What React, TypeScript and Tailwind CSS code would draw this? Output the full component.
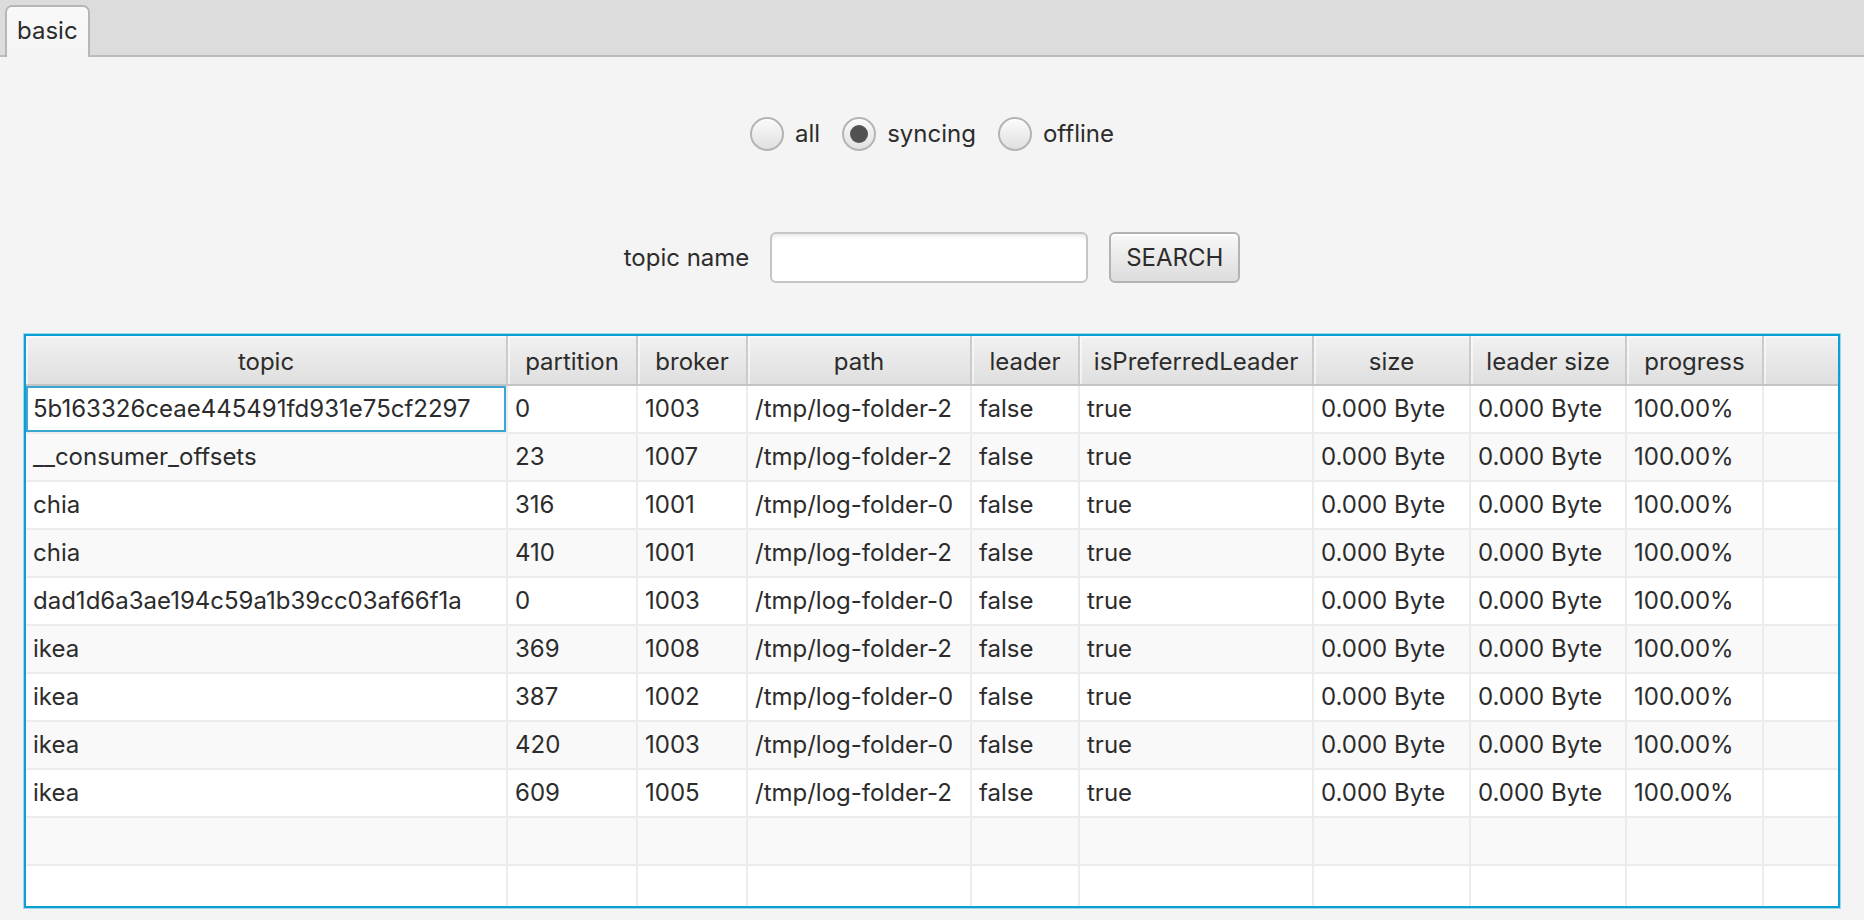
import React from "react";

const COLUMNS = [
  "topic",
  "partition",
  "broker",
  "path",
  "leader",
  "isPreferredLeader",
  "size",
  "leader size",
  "progress",
  "",
];

const ROWS: string[][] = [
  ["5b163326ceae445491fd931e75cf2297", "0", "1003", "/tmp/log-folder-2"],
  ["__consumer_offsets", "23", "1007", "/tmp/log-folder-2"],
  ["chia", "316", "1001", "/tmp/log-folder-0"],
  ["chia", "410", "1001", "/tmp/log-folder-2"],
  ["dad1d6a3ae194c59a1b39cc03af66f1a", "0", "1003", "/tmp/log-folder-0"],
  ["ikea", "369", "1008", "/tmp/log-folder-2"],
  ["ikea", "387", "1002", "/tmp/log-folder-0"],
  ["ikea", "420", "1003", "/tmp/log-folder-0"],
  ["ikea", "609", "1005", "/tmp/log-folder-2"],
].map((r) => [...r, "false", "true", "0.000 Byte", "0.000 Byte", "100.00%", ""]);

const GRID =
  "grid grid-cols-[482px_130px_110px_224px_108px_234px_157px_156px_137px_1fr]";

function Radio({ label, checked }: { label: string; checked?: boolean }) {
  return (
    <label className="flex items-center gap-[11px]">
      <span className="flex h-[34px] w-[34px] items-center justify-center rounded-full border-2 border-[#b4b4b4] bg-gradient-to-b from-[#fbfbfb] to-[#e0e0e0] shadow-[inset_0_1px_0_#ffffff]">
        {checked && <span className="h-[18px] w-[18px] rounded-full bg-[#515151]" />}
      </span>
      <span>{label}</span>
    </label>
  );
}

export default function App() {
  return (
    <div className="flex h-[920px] w-full flex-col bg-[#f4f4f4] font-[Inter,sans-serif] text-[24px] leading-none text-[#2c2c2c]">
      {/* tab strip */}
      <div className="flex h-[57px] shrink-0 items-end border-b-2 border-[#bcbcbc] bg-[#dcdcdc] pl-[5px]">
        <div className="-mb-[2px] flex h-[52px] items-center rounded-t-[7px] border-2 border-b-0 border-[#b6b6b6] bg-gradient-to-b from-[#f9f9f9] to-[#f4f4f4] px-[10px] pb-[3px]">
          basic
        </div>
      </div>

      <div className="mt-[60px] flex justify-center gap-[22px]">
        <Radio label="all" />
        <Radio label="syncing" checked />
        <Radio label="offline" />
      </div>

      <div className="mt-[81px] flex items-center justify-center gap-[21px]">
        <span>topic name</span>
        <div className="h-[51px] w-[318px] rounded-[6px] border-2 border-[#c5c5c5] bg-white shadow-[inset_0_5px_4px_-3px_rgba(0,0,0,0.10)]" />
        <button className="flex h-[51px] w-[131px] items-center justify-center rounded-[6px] border-2 border-[#b3b3b3] bg-gradient-to-b from-[#f8f8f8] to-[#dcdcdc] shadow-[inset_0_2px_0_#ffffff]">
          SEARCH
        </button>
      </div>

      {/* table */}
      <div className="mx-[24px] mb-[12px] mt-[51px] min-h-0 flex-1 overflow-hidden border-2 border-[#0b9fd5] bg-white shadow-[0_0_0_1px_#9fd6ec]">
        <div className={`${GRID} h-[50px] border-b-2 border-[#c3c3c3] bg-gradient-to-b from-[#f1f1f1] to-[#dfdfdf]`}>
          {COLUMNS.map((c, i) => (
            <div
              key={i}
              className="flex items-center justify-center border-r-2 border-[#cbcbcb] pt-[4px] shadow-[inset_2px_2px_0_rgba(255,255,255,0.55)] last:border-r-0"
            >
              {c}
            </div>
          ))}
        </div>

        {[...ROWS, ...Array.from({ length: 3 }, () => Array(10).fill(""))].map((row, r) => (
          <div
            key={r}
            className={`${GRID} h-[48px] border-b-2 border-[#ececec] ${r % 2 === 0 ? "bg-white" : "bg-[#f9f9f9]"}`}
          >
            {row.map((v, i) => (
              <div
                key={i}
                className={`flex items-center whitespace-nowrap border-r-2 border-[#ececec] pl-[7px] last:border-r-0 ${
                  r === 0 && i === 0 ? "ring-2 ring-inset ring-[#3aa6d4]" : ""
                }`}
              >
                {v}
              </div>
            ))}
          </div>
        ))}
      </div>
    </div>
  );
}
